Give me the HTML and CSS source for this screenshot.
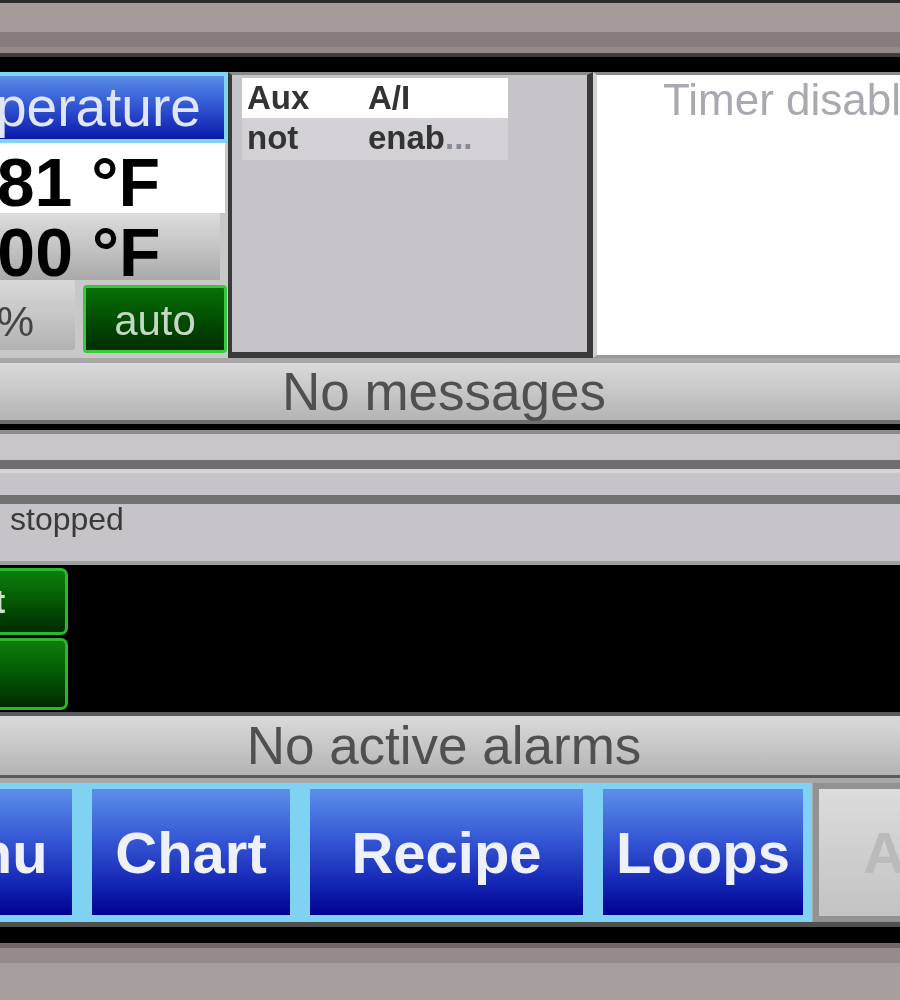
FILE: index.html
```html
<!DOCTYPE html>
<html>
<head>
<meta charset="utf-8">
<link rel="stylesheet" href="styles.css">
</head>
<body>
<div class="screen">
  <div class="b b-top0"></div>
  <div class="b b-top1"></div>
  <div class="b b-top2"></div>
  <div class="b b-top3"></div>
  <div class="b b-top4"></div>
  <div class="b b-black1"></div>

  <div class="panels">
    <div class="left">
      <div class="hdr">Temperature</div>
      <div class="val1">72.81 °F</div>
      <div class="val2">100.00 °F</div>
      <div class="btnrow">
        <div class="pct">50 %</div>
        <div class="auto">auto</div>
      </div>
    </div>
    <div class="mid">
      <div class="tbl">
        <div class="tr tr1"><div class="td">Aux</div><div class="td">A/I</div></div>
        <div class="tr tr2"><div class="td">not</div><div class="td">enab<span class="dots">...</span></div></div>
      </div>
    </div>
    <div class="right">Timer disabled</div>
  </div>

  <div class="b b-sep1"></div>
  <div class="msg msg1">No messages</div>
  <div class="b b-d1"></div>
  <div class="b b-k1"></div>
  <div class="b b-g1"></div>
  <div class="b b-l1"></div>
  <div class="b b-dk1"></div>
  <div class="b b-hl1"></div>
  <div class="b b-l2"></div>
  <div class="b b-dk2"></div>
  <div class="status">stopped</div>
  <div class="b b-g2"></div>

  <div class="blackarea">
    <div class="gbtn gbtn1">Start</div>
    <div class="gbtn gbtn2"></div>
  </div>

  <div class="b b-d2"></div>
  <div class="msg msg2">No active alarms</div>
  <div class="b b-d3"></div>
  <div class="b b-g3"></div>

  <div class="nav">
    <div class="navblue">
      <div class="nb nb-menu">Menu</div>
      <div class="nb nb-chart">Chart</div>
      <div class="nb nb-recipe">Recipe</div>
      <div class="nb nb-loops">Loops</div>
    </div>
    <div class="navgrey">Aux</div>
  </div>

  <div class="b b-d4"></div>
  <div class="b b-k2"></div>
  <div class="b b-bot1"></div>
  <div class="b b-bot2"></div>
  <div class="b b-bot3"></div>
</div>
</body>
</html>
```

FILE: styles.css
```css
html, body {
  margin: 0;
  padding: 0;
  overflow: hidden;
  background: #000;
}
body {
  width: 900px;
  height: 1000px;
  font-family: "Liberation Sans", Arial, sans-serif;
}
.screen {
  margin-left: -135px;
  width: 1158px;
  filter: blur(0.7px);
}
.b { width: 100%; }
.b-top0 { height: 3px; background: #2c2c2c; }
.b-top1 { height: 29px; background: #a59c9a; }
.b-top2 { height: 15px; background: #877d7b; }
.b-top3 { height: 6px; background: #948b89; }
.b-top4 { height: 4px; background: #3e3e3e; }
.b-black1 { height: 15px; background: #000; }

/* top panels */
.panels {
  display: flex;
  height: 286px;
}
.left {
  width: 363px;
  flex: none;
  display: flex;
  flex-direction: column;
  background: #c8c8c8;
}
.hdr {
  height: 71px;
  box-sizing: border-box;
  border: 4px solid #7fd3f3;
  background: linear-gradient(#5a8de9, #2f52d2 50%, #0a1aa8);
  color: #dfe6f7;
  font-size: 55px;
  line-height: 63px;
  text-align: center;
  white-space: nowrap;
  overflow: hidden;
}
.val1 {
  height: 70px;
  margin-right: 3px;
  background: #fff;
  font-size: 68px;
  font-weight: bold;
  line-height: 79px;
  color: #000;
  text-align: right;
  padding-right: 65px;
  white-space: nowrap;
}
.val2 {
  height: 67px;
  margin-right: 8px;
  background: linear-gradient(#dcdcdc, #c4c4c4 50%, #a9a9a9);
  font-size: 68px;
  font-weight: bold;
  line-height: 79px;
  color: #000;
  text-align: right;
  padding-right: 60px;
  white-space: nowrap;
}
.btnrow {
  flex: 1;
  display: flex;
  align-items: flex-start;
}
.pct {
  width: 210px;
  height: 70px;
  box-sizing: border-box;
  padding-top: 7px;
  padding-right: 41px;
  line-height: 70px;
  font-size: 42px;
  color: #444;
  text-align: right;
  background: linear-gradient(#d9d9d9, #c6c6c6 50%, #b2b2b2);
  border-radius: 0 3px 3px 0;
}
.auto {
  margin-left: 8px;
  margin-top: 5px;
  width: 144px;
  height: 68px;
  box-sizing: border-box;
  border: 3px solid #3cc83c;
  border-radius: 4px;
  padding-top: 3px;
  line-height: 59px;
  background: linear-gradient(#077207, #024a02 55%, #002c00);
  color: #c5d8c5;
  font-size: 42px;
  text-align: center;
}
.mid {
  width: 365px;
  flex: none;
  box-sizing: border-box;
  border-top: 3px solid #8a8a8a;
  border-left: 4px solid #3a3a3a;
  border-right: 6px solid #3a3a3a;
  border-bottom: 6px solid #3a3a3a;
  background: #c6c4c8;
  padding: 3px 0 0 10px;
}
.tbl {
  width: 266px;
  font-size: 33px;
  font-weight: bold;
  color: #333;
}
.tr {
  display: grid;
  grid-template-columns: 121px 145px;
}
.tr1 { height: 40px; line-height: 40px; background: #fff; }
.tr2 { height: 42px; line-height: 40px; background: #d3d1d5; }
.td { padding-left: 5px; white-space: nowrap; }
.dots { color: #8a8a98; }
.right {
  flex: 1;
  box-sizing: border-box;
  border-left: 4px solid #d2d2d2;
  border-top: 3px solid #8a8a8a;
  border-bottom: 3px solid #9a9a9a;
  background: #fff;
  padding-left: 66px;
  font-size: 44px;
  color: #a9a9b2;
  white-space: nowrap;
  overflow: hidden;
}

/* middle bands */
.b-sep1 { height: 5px; background: #a8a8a8; }
.msg {
  text-align: center;
  font-size: 53px;
  color: #505050;
  background: linear-gradient(#dadada, #c9c9c9 45%, #b4b4b4);
  white-space: nowrap;
}
.msg1 { height: 57px; line-height: 57px; }
.msg2 { height: 59px; line-height: 59px; }
.b-d1 { height: 4px; background: #6e6e6e; }
.b-k1 { height: 6px; background: #000; }
.b-g1 { height: 4px; background: #8c8c8c; }
.b-l1 { height: 26px; background: #c8c6c9; }
.b-dk1 { height: 9px; background: #6e6e70; }
.b-hl1 { height: 4px; background: #d6d4d6; }
.b-l2 { height: 22px; background: #c6c4c8; }
.b-dk2 { height: 9px; background: #727272; }
.status {
  height: 57px;
  background: #c6c4c8;
  padding-left: 145px;
  font-size: 32px;
  line-height: 30px;
  color: #3a3a3a;
}
.b-g2 { height: 4px; background: #a0a0a0; }

.blackarea {
  height: 147px;
  box-sizing: border-box;
  background: #000;
  padding-top: 3px;
  display: flex;
  flex-direction: column;
  gap: 3px;
}
.gbtn {
  width: 203px;
  box-sizing: border-box;
  border: 3px solid #2fb52f;
  border-radius: 0 7px 7px 0;
  background: linear-gradient(#0c800c, #045804 50%, #002a00);
  color: #d0e0d0;
  font-size: 34px;
  font-weight: bold;
  text-align: center;
}
.gbtn1 { height: 67px; line-height: 61px; }
.gbtn2 { height: 72px; }

.b-d2 { height: 4px; background: #5a5a5a; }
.b-d3 { height: 3px; background: #5a5a5a; }
.b-g3 { height: 5px; background: #a8a8a8; }

/* nav */
.nav {
  display: flex;
  height: 139px;
  background: #a8a8a8;
}
.navblue {
  display: flex;
  gap: 20px;
  padding: 6px 9px 7px 7px;
  background: #80d2f2;
}
.nb {
  display: flex;
  align-items: center;
  justify-content: center;
  background: linear-gradient(#5c8fe9 0%, #3557d4 40%, #1426b4 75%, #000090 100%);
  color: #eef0fa;
  font-size: 58px;
  font-weight: bold;
  white-space: nowrap;
}
.nb-menu { width: 200px; }
.nb-chart { width: 198px; }
.nb-recipe { width: 273px; }
.nb-loops { width: 200px; }
.navgrey {
  margin-left: 1px;
  flex: 1;
  box-sizing: border-box;
  border: 6px solid #929292;
  background: linear-gradient(#dcdcdc, #cfcfcf 50%, #c3c3c3);
  color: #bababa;
  font-size: 58px;
  font-weight: bold;
  display: flex;
  align-items: center;
  justify-content: center;
}

.b-d4 { height: 5px; background: #505050; }
.b-k2 { height: 16px; background: #000; }
.b-bot1 { height: 5px; background: #6e6868; }
.b-bot2 { height: 15px; background: #958c8a; }
.b-bot3 { height: 37px; background: #a69e9c; }
```
